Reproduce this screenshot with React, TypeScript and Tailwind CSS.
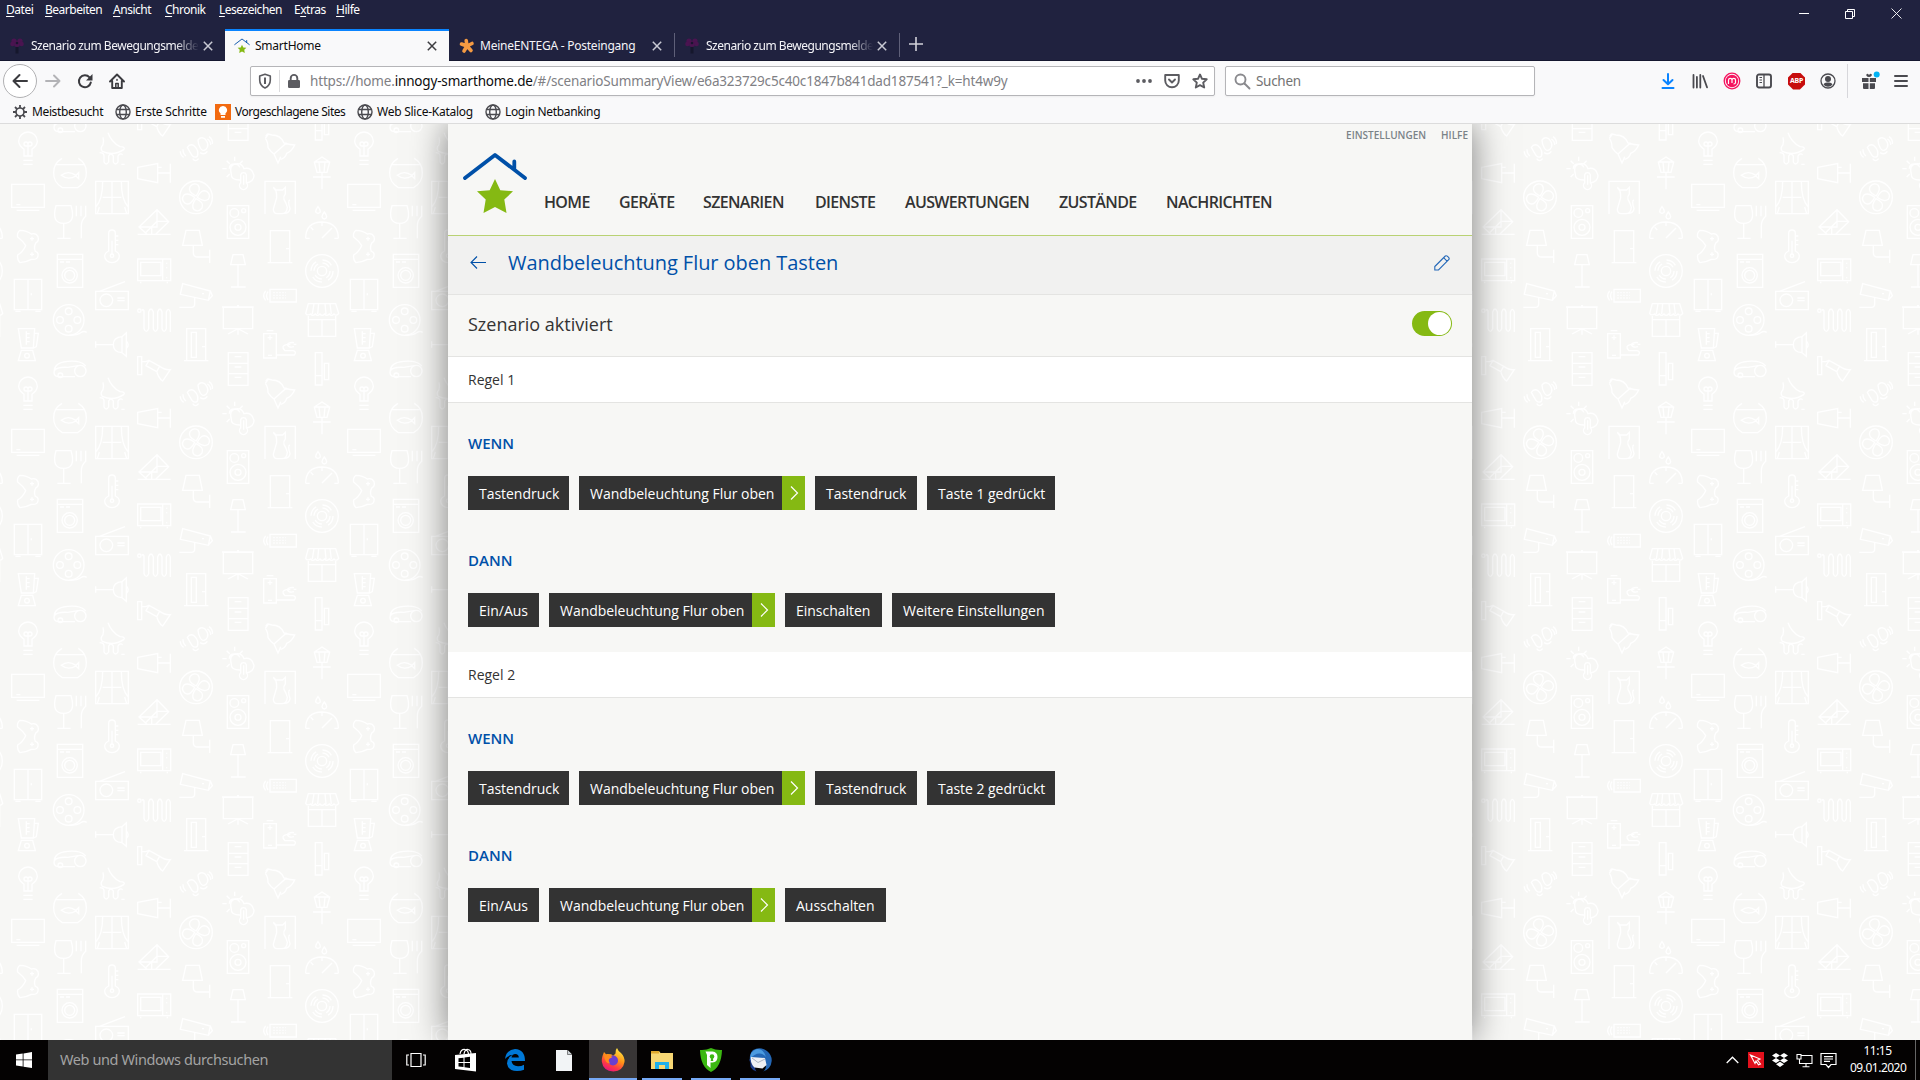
import type { ReactNode } from "react";
import clsx from "clsx";

interface Chip {
  label: string;
  width: string;
  linked?: boolean;
}

interface Rule {
  title: string;
  when: Chip[];
  then: Chip[];
}

const MENU = [
  { key: "D", rest: "atei", width: "w-[39px]" },
  { key: "B", rest: "earbeiten", width: "w-[68px]" },
  { key: "A", rest: "nsicht", width: "w-[52px]" },
  { key: "C", rest: "hronik", width: "w-[54px]" },
  { key: "L", rest: "esezeichen", width: "w-[75px]" },
  { pre: "E", key: "x", rest: "tras", width: "w-[42px]" },
  { key: "H", rest: "ilfe", width: "w-[40px]" },
];

const NAV = [
  { label: "HOME", width: "w-[75px]" },
  { label: "GERÄTE", width: "w-[84px]" },
  { label: "SZENARIEN", width: "w-[112px]" },
  { label: "DIENSTE", width: "w-[90px]" },
  { label: "AUSWERTUNGEN", width: "w-[154px]" },
  { label: "ZUSTÄNDE", width: "w-[107px]" },
  { label: "NACHRICHTEN", width: "w-[110px]" },
];

const RULES: Rule[] = [
  {
    title: "Regel 1",
    when: [
      { label: "Tastendruck", width: "w-[101px]" },
      { label: "Wandbeleuchtung Flur oben", width: "w-[226px]", linked: true },
      { label: "Tastendruck", width: "w-[102px]" },
      { label: "Taste 1 gedrückt", width: "w-[128px]" },
    ],
    then: [
      { label: "Ein/Aus", width: "w-[71px]" },
      { label: "Wandbeleuchtung Flur oben", width: "w-[226px]", linked: true },
      { label: "Einschalten", width: "w-[97px]" },
      { label: "Weitere Einstellungen", width: "w-[163px]" },
    ],
  },
  {
    title: "Regel 2",
    when: [
      { label: "Tastendruck", width: "w-[101px]" },
      { label: "Wandbeleuchtung Flur oben", width: "w-[226px]", linked: true },
      { label: "Tastendruck", width: "w-[102px]" },
      { label: "Taste 2 gedrückt", width: "w-[128px]" },
    ],
    then: [
      { label: "Ein/Aus", width: "w-[71px]" },
      { label: "Wandbeleuchtung Flur oben", width: "w-[226px]", linked: true },
      { label: "Ausschalten", width: "w-[101px]" },
    ],
  },
];

function FlowerIcon() {
  return (
    <svg viewBox="0 0 16 16" className="w-4 h-4 shrink-0">
      <g fill="#4a1450">
        <circle cx="5" cy="3" r="2.6" />
        <circle cx="11" cy="3" r="2.6" />
        <circle cx="3.4" cy="6" r="2.2" />
        <circle cx="12.6" cy="6" r="2.2" />
        <circle cx="8" cy="6" r="3" />
      </g>
      <circle cx="8" cy="5" r="1.3" fill="#1a1430" />
      <path d="M6.5 9h3v6.5h-3z" fill="#15172c" />
    </svg>
  );
}

function HouseStar({ className }: { className: string }) {
  return (
    <svg viewBox="0 0 66 64" className={className}>
      <path d="M3 26 33 3l30 23M52.300 17.500V9.500" fill="none" stroke="#0050a8" strokeWidth="3.8" strokeLinecap="round" strokeLinejoin="round" />
      <path d="m33 27 5.300 11.200L51 39.300l-8.700 8.300 2.200 13.400L33 55l-11.500 6 2.200-13.400L15 39.300l12.700-1.100z" fill="#85b913" />
    </svg>
  );
}

function AsteriskIcon() {
  return (
    <svg viewBox="0 0 16 16" className="w-4 h-4 shrink-0">
      <path d="M8 8 7.200 2.500M8 8l5-2.500M8 8l4 4.500M8 8l-3 5M8 8 2.500 6" stroke="#f49a42" strokeWidth="3.600" strokeLinecap="round" />
    </svg>
  );
}

function TabClose({ active }: { active?: boolean }) {
  return (
    <svg viewBox="0 0 10 10" className="w-[10px] h-[10px] shrink-0">
      <path d="m.8.8 8.400 8.400M9.200.8.8 9.200" stroke={active ? "#3c3c40" : "#c9cad4"} strokeWidth="1.500" />
    </svg>
  );
}

function Tab({ icon, title, active, fade, className }: { icon: ReactNode; title: string; active?: boolean; fade?: boolean; className?: string }) {
  return (
    <div
      className={clsx(
        "flex items-center h-8 pl-[9px] pr-[12px]",
        active ? "bg-[#f9f9fa] text-[#0c0c0d] border-t-2 border-[#0a84ff] pb-px" : "text-[#f4f4f8] pt-px",
        className
      )}
    >
      {icon}
      <span
        className={clsx(
          "flex-1 whitespace-nowrap text-[12px]",
          fade ? "ml-[6px] tracking-[-0.47px] [mask-image:linear-gradient(to_right,black_86%,transparent)]" : "ml-[5px] tracking-[-0.24px]"
        )}
      >
        {title}
      </span>
      <span className="ml-1 flex">
        <TabClose active={active} />
      </span>
    </div>
  );
}

function TitleBar() {
  return (
    <header className="h-[61px] bg-[#20223f] text-white border-b border-[#15172f]">
      <div className="flex justify-between h-[29px]">
        <nav className="flex pl-[6px] pt-[1px] text-[12px] leading-[18px] tracking-[-0.48px]">
          {MENU.map((item) => (
            <span key={item.key} className={clsx("shrink-0 whitespace-nowrap", item.width)}>
              {item.pre}
              <span className="underline underline-offset-2">{item.key}</span>
              {item.rest}
            </span>
          ))}
        </nav>
        <div className="flex items-center gap-[36px] pr-[18px] pb-[2px]">
          <svg width="10" height="10" className="shrink-0">
            <path d="M0 4.500h10" stroke="#fff" />
          </svg>
          <svg width="10" height="10" className="shrink-0" fill="none" stroke="#fff">
            <path d="M.5 2.500h7v7h-7zM2.500 2.500v-2h7v7h-2" />
          </svg>
          <svg width="11" height="11" className="shrink-0">
            <path d="m.5.5 10 10m0-10-10 10" stroke="#fff" strokeWidth=".9" />
          </svg>
        </div>
      </div>
      <div className="flex h-8">
        <Tab icon={<FlowerIcon />} title="Szenario zum Bewegungsmelde" fade className="w-[225px]" />
        <Tab icon={<HouseStar className="w-4 h-4 shrink-0" />} title="SmartHome" active className="w-[224px]" />
        <Tab icon={<AsteriskIcon />} title="MeineENTEGA - Posteingang" className="w-[225px] pl-[10px]" />
        <span className="w-px h-6 mt-1 bg-[#5f6079]" />
        <Tab icon={<FlowerIcon />} title="Szenario zum Bewegungsmelde" fade className="w-[224px]" />
        <span className="w-px h-6 mt-1 bg-[#5f6079]" />
        <svg width="14" height="14" className="mt-[8px] ml-[9px]">
          <path d="M7 0v14M0 7h14" stroke="#d2d2da" strokeWidth="1.600" />
        </svg>
      </div>
    </header>
  );
}

function ToolbarIcons() {
  return (
    <div className="flex items-center">
      <svg width="16" height="16" fill="none" stroke="#0a84ff" strokeWidth="2" strokeLinecap="round" strokeLinejoin="round">
        <path d="M8 1v10M3.500 7 8 11.300 12.500 7M2.500 15h11" />
      </svg>
      <svg width="16" height="16" className="ml-4" fill="none" stroke="#4a4a4f" strokeWidth="1.800" strokeLinecap="round">
        <path d="M1.500 2v12.500M4.900 4v10.500M8.300 2v12.500M11 3l4 11.300" />
      </svg>
      <svg width="18" height="18" viewBox="0 0 18 18" className="ml-[15px]" fill="none">
        <circle cx="9" cy="9" r="7.800" stroke="#f5145f" strokeWidth="1.300" />
        <circle cx="9" cy="9" r="6.200" fill="#f5145f" />
        <path d="M5.500 12V8q.2-1.700 1.700-1.700Q9 6.300 9 8v3-3q.2-1.700 1.800-1.700 1.700 0 1.700 1.700v2.500q0 1.500-2 1.500" stroke="#fff" strokeWidth="1.200" />
      </svg>
      <svg width="16" height="16" className="ml-[15px]" fill="none" stroke="#4a4a4f" strokeWidth="1.900">
        <rect x="1" y="1.500" width="14" height="13" rx="2" />
        <path d="M8 2v12" strokeWidth="1.300" />
        <path d="M3.500 4.500h2.500M3.500 7h2.500M3.500 9.500h2.500" strokeWidth="1" />
      </svg>
      <span className="ml-4 flex w-[17px] h-[17px] items-center justify-center bg-[#c70d0d] text-white text-[7px] font-bold tracking-[-0.2px] [clip-path:polygon(30%_0,70%_0,100%_30%,100%_70%,70%_100%,30%_100%,0_70%,0_30%)]">
        ABP
      </span>
      <svg width="16" height="16" className="ml-[15px]">
        <circle cx="8" cy="8" r="7" fill="none" stroke="#4a4a4f" strokeWidth="1.300" />
        <circle cx="8" cy="6" r="3" fill="#4a4a4f" />
        <path d="M3.500 11.500Q4.500 9 8 9.500q3.500-.5 4.500 2Q11 13.700 8 13.700t-4.500-2.200z" fill="#4a4a4f" />
      </svg>
      <span className="w-px h-[34px] ml-[11px] bg-[#d7d7db]" />
      <svg width="20" height="20" viewBox="0 0 20 20" className="ml-[12px]" fill="#4a4a4f">
        <path d="M2 7h6.500v4H2zM9.800 7H16v4H9.800zM3 12.200h5.500V18H4q-1 0-1-1zM9.800 12.200H15V17q0 1-1 1H9.800zM9 6Q5.500 5.500 6.500 3.200 7.600 2.200 9 4q1.500-1.800 2.700-.8Q12.500 5.500 9 6z" />
        <circle cx="16.700" cy="3.600" r="3" fill="#00b3f4" />
      </svg>
      <svg width="14" height="14" className="ml-[14px]">
        <path d="M1 2h12M1 7h12M1 12h12" stroke="#4a4a4f" strokeWidth="2" strokeLinecap="round" />
      </svg>
    </div>
  );
}

function NavigationBar() {
  return (
    <div className="flex items-center h-10 pl-[3px] pr-[12px] bg-[#f9f9fa]">
      <span className="flex items-center justify-center w-[34px] h-[34px] rounded-full border border-[#b1b1b3] bg-white">
        <svg width="16" height="16" fill="none" stroke="#3b3b3f" strokeWidth="2" strokeLinecap="round" strokeLinejoin="round">
          <path d="M15 8H1.500M7.500 2 1.500 8l6 6" />
        </svg>
      </span>
      <svg width="16" height="16" className="ml-2" fill="none" stroke="#b3b3b6" strokeWidth="1.900" strokeLinecap="round" strokeLinejoin="round">
        <path d="M1 8h13.500M9 2.500 14.500 8 9 13.500" />
      </svg>
      <svg width="16" height="16" className="ml-4" fill="none" stroke="#3b3b3f" strokeWidth="2">
        <path d="M13.800 9.500A6 6 0 1 1 12.500 4.300" strokeLinecap="round" />
        <path d="M15.500 1v6.500H9z" fill="#3b3b3f" stroke="none" />
      </svg>
      <svg width="16" height="16" className="ml-4" fill="none" stroke="#3b3b3f" strokeWidth="1.900" strokeLinecap="round" strokeLinejoin="round">
        <path d="M1 8.500 8 1.500l7 7M3.200 8v7h9.600V8" />
        <path d="M6.800 15v-4.500h2.400V15M8 6.500v.8" strokeWidth="1.500" />
      </svg>
      <div className="ml-[125px] flex items-center w-[965px] h-[30px] pl-[6px] pr-[6px] bg-white border border-[#b5b5b8] rounded-[2px] shadow-xs">
        <svg width="16" height="16" fill="none" stroke="#5c5c61" strokeWidth="1.600">
          <path d="M8 1.200 13.300 3v4q0 5.500-5.300 8Q2.700 12.500 2.700 7V3z" strokeLinejoin="round" />
          <path d="M8 4.500v6.500" strokeWidth="2" />
        </svg>
        <span className="w-px h-[22px] ml-[6px] bg-[#dcdcde]" />
        <svg width="16" height="16" className="ml-[6px]">
          <path d="M4.700 8V5.200a3.300 3.300 0 0 1 6.600 0V8" fill="none" stroke="#5c5c61" strokeWidth="1.900" />
          <rect x="2" y="7" width="12" height="8" rx="1.200" fill="#5c5c61" />
        </svg>
        <span className="ml-[8px] pt-px flex-1 whitespace-nowrap text-[13.5px] tracking-[-0.17px] text-[#808084]">
          https://home.<span className="text-[#0c0c0d]">innogy-smarthome.de</span>
          /#/scenarioSummaryView/e6a323729c5c40c1847b841dad187541?_k=ht4w9y
        </span>
        <svg width="16" height="4" fill="#5c5c61">
          <circle cx="2" cy="2" r="1.900" />
          <circle cx="8" cy="2" r="1.900" />
          <circle cx="14" cy="2" r="1.900" />
        </svg>
        <svg width="16" height="16" className="ml-3" fill="none" stroke="#5c5c61" strokeWidth="1.900" strokeLinecap="round" strokeLinejoin="round">
          <path d="M1.200 2h13.600v5.500a6.800 6.800 0 0 1-13.600 0z" />
          <path d="m5 6.500 3 3 3-3" />
        </svg>
        <svg width="16" height="16" className="ml-3" fill="none" stroke="#5c5c61" strokeWidth="1.900" strokeLinejoin="round">
          <path d="m8 1.500 2 4.300 4.700.5-3.500 3.300 1 4.900L8 12.200l-4.200 2.300 1-4.900L1.300 6.300 6 5.800z" />
        </svg>
      </div>
      <div className="ml-[10px] flex items-center w-[310px] h-[30px] px-[8px] bg-white border border-[#b5b5b8] rounded-[2px] shadow-xs">
        <svg width="17" height="17" fill="none" stroke="#8a8a8e" strokeWidth="1.900" strokeLinecap="round">
          <circle cx="6.500" cy="6.500" r="5" />
          <path d="m10.500 10.500 5 5" />
        </svg>
        <span className="ml-[5px] pt-px text-[13.5px] tracking-[-0.3px] text-[#737373]">Suchen</span>
      </div>
      <div className="ml-auto">
        <ToolbarIcons />
      </div>
    </div>
  );
}

function GlobeIcon() {
  return (
    <svg width="16" height="16" fill="none" stroke="#4a4a4f" strokeWidth="1.400" className="shrink-0">
      <circle cx="8" cy="8" r="7" />
      <ellipse cx="8" cy="8" rx="3.300" ry="7" />
      <path d="M1.500 5.500h13M1.500 10.500h13" />
    </svg>
  );
}

function GearIcon() {
  return (
    <svg width="16" height="16" fill="none" stroke="#4a4a4f" className="shrink-0">
      <circle cx="8" cy="8" r="4" strokeWidth="1.700" />
      <path d="M8 1v3M8 12v3M1 8h3M12 8h3M3 3l2.100 2.100M10.900 10.900 13 13M13 3l-2.100 2.100M5.100 10.900 3 13" strokeWidth="1.800" />
    </svg>
  );
}

function BulbIcon() {
  return (
    <svg width="16" height="16" className="shrink-0">
      <path d="M0 0h16v16H0z" fill="#f26a10" />
      <path d="M8 2a4 4 0 0 1 2.500 7.200V11h-5V9.200A4 4 0 0 1 8 2zM6 12h4v1.700H6z" fill="#fff" />
    </svg>
  );
}

const BOOKMARKS = [
  { label: "Meistbesucht", icon: <GearIcon />, width: "w-[103px] tracking-[-0.38px]" },
  { label: "Erste Schritte", icon: <GlobeIcon />, width: "w-[100px] tracking-[-0.22px]" },
  { label: "Vorgeschlagene Sites", icon: <BulbIcon />, width: "w-[142px] tracking-[-0.48px]" },
  { label: "Web Slice-Katalog", icon: <GlobeIcon />, width: "w-[128px] tracking-[-0.26px]" },
  { label: "Login Netbanking", icon: <GlobeIcon />, width: "w-[130px] tracking-[-0.34px]" },
];

function BookmarksBar() {
  return (
    <div className="flex items-center h-[23px] pl-3 pb-px bg-[#f9f9fa] border-b border-[#dcdcdc] text-[12px] text-[#0c0c0d]">
      {BOOKMARKS.map((b) => (
        <span key={b.label} className={clsx("flex items-center gap-1 shrink-0 whitespace-nowrap", b.width)}>
          {b.icon}
          {b.label}
        </span>
      ))}
    </div>
  );
}

// One 336x245 tile of household line icons, drawn at three times its size
function TileShapes() {
  return (
    <>
      <path d="M72 108V88Q56 76 56 64a28 28 0 0 1 56 0q0 12-16 24v20zM70 121h28M70 133h28M84 108V68M78 78a6 6 0 1 1 6-6 6 6 0 1 1 6 6z" />
      <path d="M35 193h98v69H35zM50 271h68M49 254h12" />
      <path d="M60 331q-10 8-7 20 16 12 24 26-8 18-24 28-2 14 7 23 20-2 34-10 18 2 20-10t-8-14q-6-12 2-26 10-4 6-18-6-12-20-8-14-10-34-11zM96 350v12M90 356h12M96 397v12M90 403h12" />
      <path d="M43 478h82v91H43zM84 478v91M46 574h16M106 574h16M94 520v6" />
      <path d="M55 626h49l-4 58H64zM104 640h11l-6 40-8 4M79 634v40M79 641h10M79 653h10M79 665h10M64 691h34l8 31H55z" />
      <circle cx="81" cy="707" r="7" />
      <path d="M186 115q-25 15-25 42a49 49 0 0 0 26 46h46a49 49 0 0 0 26-46q0-27-24-42M166 134h88M184 166q20-16 44 0l8-8v18l-8-8q-24 14-44-2z" />
      <path d="M168 257h45q16 53-22 53t-23-53zM191 310v44M172 355h40M229 257v32M243 257v32M257 257v32q-13 12-13 28v38" />
      <path d="M172 403h76v99h-76zM172 418h76M180 426h12M198 426h12" />
      <circle cx="209" cy="466" r="23" /><circle cx="209" cy="466" r="15" />
      <circle cx="206" cy="600" r="46" /><circle cx="206" cy="574" r="10" /><circle cx="206" cy="626" r="10" /><circle cx="180" cy="600" r="10" /><circle cx="232" cy="600" r="10" />
      <path d="M206 646q28 0 38-9 8-5 16 0M163 752q0-24 40-28 40-4 54 14M163 752q-4 16 12 18h50M163 752q8-12 40-10l32-5" />
      <circle cx="241" cy="753" r="17" /><circle cx="181" cy="766" r="7" />
      <path d="M324 38q10 28 36 42 18 0 11 9-30 20-64 5-8-10 2-20 3-12 0-22M299 98q13 0 13 10v18q6 12 14 0v-18q6-12 14 0v18q6 12 14 0v-18q6-10 14-4M364 133h10" />
      <path d="M287 184h98v97h-98zM336 184v97M308 184q0 55-20 76M364 184q0 55 20 76M308 232h56M292 281l6-20M380 281l-6-20" />
      <path d="M326 393v-53a10 10 0 0 1 20 0v53q12 6 12 16a22 19 0 0 1-44 0q0-10 12-16zM346 348h9M346 361h9M346 374h9M336 362v44" />
      <circle cx="336" cy="407" r="5" />
      <path d="M287 514h98v55h-98zM298 514l77-29M352 534h22M352 542h22" /><circle cx="319" cy="541" r="19" />
      <path d="M287 664v19M287 674h53M366 650q-26 2-26 24t26 24zM366 650l13-12v71l-13-11M380 664q9 10 0 20" />
      <path d="M413 142l60-11v57l-60-12zM473 159h38M511 131v57M473 142h12" />
      <path d="M413 343h99M441 343l-24-22 54-52 35 36-39 38M417 321h54V269M471 304h34M471 304l-35 35M455 321v22" />
      <path d="M413 417h99v65h-99zM422 427h61v40h-61zM488 417v65M500 428v3M500 442v3M500 472v3M422 485v5M502 485v5" />
      <path d="M425 571q7-5 7 5v50q7 16 14 0v-50q7-18 14 0v50q6 16 13 0v-50q7-18 13 0v50q6 16 13 0v-50q6-16 12 0v60" /><circle cx="418" cy="572" r="5" />
      <path d="M413 710h12v54h-12zM425 725h12l10-4M447 721l-9 16 32 18 9-16zM479 739q18 12 32 10l-23 34q-14-10-18-30" />
      <path d="M594 60q10-12 22-2 14 16 2 30-10 8-17-4t-7-24zM562 82q8-12 20-5 16 14 10 32-10 6-16-3t-14-24zM600 98q14 8 22-4M578 116q8 12 18 0M622 57q10 6 10 18M627 50q12 8 10 22M549 88q0 14 9 20M541 94q0 12 10 18" />
      <circle cx="588" cy="232" r="49" />
      <path d="M588 228q-26-12-18-28 10-14 24-5 10 12-6 33zM592 232q12-26 28-18 14 10 5 24-12 10-33-6zM588 236q26 12 18 28-10 14-24 5-10-12 6-33zM584 232q-12 26-28 18-14-10-5-24 12-10 33 6z" />
      <path d="M558 331h40l9 45h-59zM580 376v22q0 13 14 13h35M629 389v40" />
      <path d="M548 491l83 22-6 28-84-18zM631 513l6 14-13 15M584 534v18q0 10-10 10h-36M606 521h6" />
      <path d="M560 722v-96h57v96M552 722h73M574 637h15v75h-15zM606 680h10" />
      <path d="M694 162q-8-30 18-31 14 0 20 15 24-6 30 20 0 20-24 23M694 162q-2 18 26 18M688 146q0-14 16-14 12 0 15 10M704 110v13M680 122l9 9M728 122l-9 9M667 146h13M680 171l9-9M722 188v-24a9 9 0 0 1 17 0v24a12 12 0 1 1-17 0zM731 166v28" />
      <path d="M682 257h64v98h-64z" /><circle cx="703" cy="279" r="13" /><circle cx="731" cy="272" r="6" /><circle cx="714" cy="322" r="24" /><circle cx="714" cy="322" r="9" />
      <path d="M699 404h30l7 30h-44zM714 434v67M693 501h44" />
      <path d="M670 562h88v64h-88zM666 561h95M684 642l30-16 30 16M714 626v18M711 557h6" />
      <path d="M685 698h59v98h-59zM685 730h59M685 761h59M704 710h20M704 741h20M704 772h20" />
      <path d="M796 55l9-13 11 3M796 55q8 10 8 28 8 12 18 19l12 27q6-13 8-19M816 45q26 0 36 24 20 6 32 6-8 18-24 25-4 14-18 18M822 102l38-34M797 49l6-8" />
      <path d="M795 282v-98h91v98M820 202l8 8h20l8-8v20q-6 6-4 16 8 14 10 24-2 18-14 19h-16q-12 0-12-14l10-34q0-12-2-20zM848 280q20 2 22-14-8-24 0-26" />
      <path d="M811 429v-97h58v97M803 428h74M858 386h10" />
      <path d="M810 508h79v38h-79zM804 515q-9 12 0 25M797 513q-12 14 0 28" />
      <path d="M820 518h38M820 526h38M820 534h38" strokeDasharray="4 5" />
      <path d="M791 641h38v73h-38zM800 632h20M803 653h14M810 646v14M804 706h12M829 705h54q8-10-4-13h-24q-14-14 4-18h12M862 674q4-8 20-6M862 674q4 10 20 6M881 673h8" />
      <path d="M943 126l23-15 23 15-8 31h-30zM943 126h46M957 126l3 31M975 126l-3 31M939 171h53M966 157v51" />
      <path d="M954 260q-14 18 0 20 14-2 0-20zM973 276q-14 18 0 21 14-3 0-21zM917 355q0-48 49-49 49 1 49 49M917 355h12M1003 355h12M966 354l30-30M932 322l8 8M966 307v11" />
      <circle cx="966" cy="453" r="49" /><circle cx="966" cy="453" r="14" /><circle cx="966" cy="453" r="24" strokeDasharray="24 14" /><circle cx="966" cy="453" r="33" strokeDasharray="32 20" />
      <path d="M925 551h82l9 29q-6 10-14 2-8 8-14 0-8 8-14 0-8 8-14 0-8 8-14 0-8 8-14 0-10 6-15-2zM942 551l-5 31M956 551l-3 31M975 551l3 31M990 551l4 31M925 588v61h82v-61M925 599h82M966 599v50" />
      <path d="M946 698h20v97h-20zM946 767h20M973 730h13v49h-13z" />
    </>
  );
}

function IconWallpaper() {
  return (
    <svg className="absolute inset-0 w-full h-full">
      <defs>
        <g id="tile" fill="none" stroke="#fff" strokeWidth="4">
          <TileShapes />
        </g>
        <pattern id="household" width="1008" height="735" patternUnits="userSpaceOnUse" patternTransform="translate(0 -4) scale(.333333)">
          <use href="#tile" />
          <use href="#tile" y="-735" />
          <use href="#tile" x="-1008" />
        </pattern>
      </defs>
      <rect width="100%" height="100%" fill="url(#household)" />
    </svg>
  );
}

function RuleChip({ chip }: { chip: Chip }) {
  return (
    <span className={clsx("flex h-[34px] shrink-0 items-center bg-[#333] text-[14px] text-white whitespace-nowrap", chip.width)}>
      <span className="flex-1 pl-[11px] tracking-[-0.03px]">{chip.label}</span>
      {chip.linked && (
        <span className="flex w-[23px] h-full pl-[2px] items-center justify-center bg-[#85b913]">
          <svg width="9" height="16" fill="none" stroke="#fff" strokeWidth="1.200">
            <path d="m1 1.500 6.500 6.500L1 14.500" />
          </svg>
        </span>
      )}
    </span>
  );
}

function ChipGroup({ heading, chips }: { heading: string; chips: Chip[] }) {
  return (
    <>
      <h3 className="h-6 text-[15px] leading-6 font-semibold text-[#0050a8]">{heading}</h3>
      <div className="mt-[21px] flex gap-[10px]">
        {chips.map((chip, i) => (
          <RuleChip key={i} chip={chip} />
        ))}
      </div>
    </>
  );
}

function ScenarioPanel() {
  return (
    <main className="relative w-[1024px] h-full mx-auto bg-[#f7f7f5] text-[#333] font-['Open_Sans',sans-serif] shadow-[0_0_34px_rgba(0,0,0,0.5)]">
      <div className="h-[112px] border-b border-[#b9d273]">
        <div className="flex justify-end gap-[15px] h-[23px] pr-1 text-[10px] leading-[23px] font-semibold text-[#7b8388]">
          <span>EINSTELLUNGEN</span>
          <span>HILFE</span>
        </div>
        <div className="flex pl-[14px]">
          <HouseStar className="w-[66px] h-[64px] mt-[5px]" />
          <nav className="flex mt-[43px] ml-[16px] text-[16px] leading-6 font-semibold tracking-[-0.65px]">
            {NAV.map((item) => (
              <span key={item.label} className={clsx("shrink-0 whitespace-nowrap", item.width)}>
                {item.label}
              </span>
            ))}
          </nav>
        </div>
      </div>

      <div className="flex items-center h-[59px] pl-[22px] pr-[22px] pb-[4px] bg-[#f1f1f0] border-b border-[#e4e4e2]">
        <svg width="17" height="14" fill="none" stroke="#0050a8" strokeWidth="1.100">
          <path d="M16 6.500H1M7 .5l-6 6 6 6" />
        </svg>
        <h1 className="ml-[21px] text-[20px] tracking-[-0.05px] text-[#0050a8]">Wandbeleuchtung Flur oben Tasten</h1>
        <svg width="16" height="16" className="ml-auto" fill="none" stroke="#2468b8" strokeWidth="1.100">
          <path d="M.8 11.500 11.300 1q1-.7 2 .2l1.500 1.500q.8 1-.1 1.900L4.500 15H.8zM9.600 2.700l3.600 3.600" />
        </svg>
      </div>

      <div className="flex items-center justify-between h-[62px] px-5 pb-[2px] bg-[#f7f7f5] border-b border-[#e4e4e2]">
        <span className="text-[18px]">Szenario aktiviert</span>
        <span className="flex w-10 h-[25px] p-px justify-end rounded-full bg-[#85b913] mb-[2px]">
          <span className="w-[23px] h-[23px] rounded-full bg-white" />
        </span>
      </div>

      {RULES.map((rule) => (
        <section key={rule.title} className="h-[295px]">
          <h2 className="h-[46px] pl-5 bg-white border-b border-[#e4e4e2] text-[14px] leading-[46px]">{rule.title}</h2>
          <div className="px-5 pt-[28px]">
            <ChipGroup heading="WENN" chips={rule.when} />
            <div className="h-[38px]" />
            <ChipGroup heading="DANN" chips={rule.then} />
          </div>
        </section>
      ))}
    </main>
  );
}

function TaskButton({ children, className }: { children: ReactNode; className?: string }) {
  return <span className={clsx("flex h-10 items-center justify-center shrink-0", className)}>{children}</span>;
}

function Taskbar() {
  return (
    <footer className="flex h-10 bg-[#040202] text-white">
      <TaskButton className="w-12">
        <svg width="16" height="16" fill="#fff">
          <path d="M0 2.500 6.700 1.500v6H0zM7.500 1.400 16 0v7.500H7.500zM0 8.300h6.700v6.200L0 13.500zM7.500 8.300H16V16l-8.500-1.300z" />
        </svg>
      </TaskButton>
      <div className="flex items-center w-[344px] pl-3 bg-[#333] text-[14.5px] tracking-[-0.4px] text-[#a3a3a3]">Web und Windows durchsuchen</div>
      <TaskButton className="w-12">
        <svg width="20" height="16" fill="none" stroke="#fff" strokeWidth="1.200">
          <path d="M5 1.500h10v13H5zM3 3H.8v10H3M17 3h2.200v10H17" />
        </svg>
      </TaskButton>
      <TaskButton className="w-[50px] pl-[2px]">
        <svg width="22" height="24">
          <path d="M5 6Q6 1 10 1.500q3 .5 3.500 4.500M9 6q1-5 4-4.500Q16 2 16 6" fill="none" stroke="#fff" strokeWidth="1.200" />
          <path d="m0 7 21-2v18.500L0 21z" fill="#fff" />
          <path d="m3.500 10.300 5-.6v4.200h-5zM9.500 9.500l5.500-.7v5.100H9.500zM3.500 14.900h5v4.200l-5-.5zM9.500 14.900H15V20l-5.500-.8z" fill="#000" />
        </svg>
      </TaskButton>
      <TaskButton className="w-[50px] pr-[2px]">
        <svg width="21" height="22">
          <path d="M1 10Q2 1 11 0q10 .5 10 12H7.500q.5 5 6.500 5.300 3.500 0 6-1.600v5Q17 22 13 22 4 22 3 14.500 3 9 8.500 5.800 3.500 6.500 1 10zM7.500 8.500h7.300Q14.700 5 11.300 5 8 5 7.500 8.500z" fill="#0078d7" />
        </svg>
      </TaskButton>
      <TaskButton className="w-[49px] pr-px">
        <svg width="16" height="21">
          <path d="M0 0h11.500L16 4.500V21H0z" fill="#f2f4f6" />
          <path d="M11.500 0v4.500H16" fill="#cdd2d6" stroke="#555" strokeWidth=".7" />
        </svg>
      </TaskButton>
      <TaskButton className="w-12 bg-[#393636] border-b-2 border-[#76a9f5] pt-[2px]">
        <svg width="24" height="24" viewBox="0 0 24 24">
          <defs>
            <linearGradient id="fox" x1="0.800" y1="0" x2="0.300" y2="1">
              <stop offset="0" stopColor="#fff04a" />
              <stop offset=".45" stopColor="#ff9416" />
              <stop offset=".75" stopColor="#ff3b45" />
              <stop offset="1" stopColor="#e81480" />
            </linearGradient>
          </defs>
          <path d="M1.500 8 3 4l2 2.300L6.500 6l3 .3Q11 6 12 8l2.500-2.500Q14 2 16 0q1 3 4 5 4 4 3.500 9Q22 23 12.500 23.500 2 23 .8 13.500.7 10.500 1.500 8z" fill="url(#fox)" />
          <circle cx="12" cy="12.500" r="5" fill="#6b3fd0" />
          <path d="M3 7.500Q7 5.500 11.500 9L8 11q-1 2.500 1 4.500-5 0-6-8z" fill="#ff8a1c" />
        </svg>
      </TaskButton>
      <TaskButton className="w-10 ml-[5px] border-b-2 border-[#76a9f5]">
        <svg width="22" height="20" className="mt-[2px]">
          <path d="M0 1h8l1.500 2H22v16H0z" fill="#f7d774" />
          <path d="M0 1h8v2.500H0z" fill="#e0a92e" />
          <path d="M4 12h14v7h-4v-4H8v4H4z" fill="#1fb0ec" />
        </svg>
      </TaskButton>
      <TaskButton className="w-10 ml-[9px] border-b-2 border-[#76a9f5]">
        <svg width="22" height="24" className="mt-[2px]">
          <path d="M11 0q5 2.500 11 2-.5 17-11 22Q.5 19 0 2q6 .5 11-2z" fill="#3cb812" />
          <path d="M5.500 3.500h7q5 .5 5 5.500t-5 5.500h-2v5.500l-3.500-3V7z" fill="#fff" />
          <circle cx="12" cy="8.500" r="2.300" fill="#3cb812" />
          <path d="M11.300 9h1.400l.6 4h-2.600z" fill="#3cb812" />
        </svg>
      </TaskButton>
      <TaskButton className="w-10 ml-[9px] border-b-2 border-[#76a9f5]">
        <svg width="24" height="24" className="mt-[2px]">
          <path d="M5 2q7-4 14 1 5 4 4.700 10Q23 21 15 23.500q3-2 3-6L2 13Q1 6 5 2z" fill="#2467b5" />
          <path d="M9 1q7 0 9 8-2-3-6-3.500Q7 5 2 11 2 3 9 1z" fill="#4b9be0" />
          <path d="M1 11q2 4 1.500 8 2 3.500 6 4.500-3-4 0-7z" fill="#1d3c88" />
          <path d="m3 9 14 1 1.500 7-4 3.500-8-1Q2 15 3 9z" fill="#eef0f4" />
          <path d="m4 10 6 4.500L17 11" fill="none" stroke="#a9b2c2" />
        </svg>
      </TaskButton>

      <div className="ml-auto flex items-center pr-[4px]">
        <svg width="13" height="8" fill="none" stroke="#fff" strokeWidth="1.300">
          <path d="m.7 7 5.800-5.800L12.300 7" />
        </svg>
        <svg width="16" height="16" className="ml-[9px]">
          <path d="M0 0h16v16H0z" fill="#e2101c" />
          <path d="m2.500 3 9.500 4-2.500 1.300 3 3.700-2 .8L8 9l-1 2.500z" fill="none" stroke="#fff" strokeWidth="1.100" />
        </svg>
        <svg width="16" height="14" className="ml-[8px]" fill="#fff">
          <path d="m4 0 4 2.500L4 5 0 2.500zM12 0l4 2.500L12 5 8 2.500zM4 5l4 2.500L4 10 0 7.500zM12 5l4 2.500-4 2.500-4-2.500zM8 8.800l4 2.500L8 14l-4-2.700z" />
        </svg>
        <svg width="17" height="15" className="ml-[8px]" fill="none" stroke="#fff" strokeWidth="1.100">
          <path d="M5 2.500h11v8H3.500V6M1 1.500h4V6H1zM10 10.500v3M6.500 13.800h7" />
        </svg>
        <svg width="17" height="17" className="ml-[7px]" fill="none" stroke="#fff" strokeWidth="1.200">
          <path d="M1 1.500h15v11h-5l-2.500 3-2.500-3H1zM4 4.700h9M4 7h9M4 9.300h6" />
        </svg>
        <div className="ml-[13px] w-[55px] whitespace-nowrap pb-[2px] text-center text-[12px] leading-[17px] tracking-[-0.5px]">
          <div>11:15</div>
          <div>09.01.2020</div>
        </div>
        <span className="w-px h-10 ml-[10px] bg-[#666]" />
      </div>
    </footer>
  );
}

export default function App() {
  return (
    <div className="flex flex-col w-[1920px] h-[1080px] overflow-hidden font-['Noto_Sans',sans-serif]">
      <TitleBar />
      <NavigationBar />
      <BookmarksBar />
      <div className="relative flex-1 min-h-0 overflow-hidden bg-[#f7f7f5]">
        <IconWallpaper />
        <ScenarioPanel />
      </div>
      <Taskbar />
    </div>
  );
}
